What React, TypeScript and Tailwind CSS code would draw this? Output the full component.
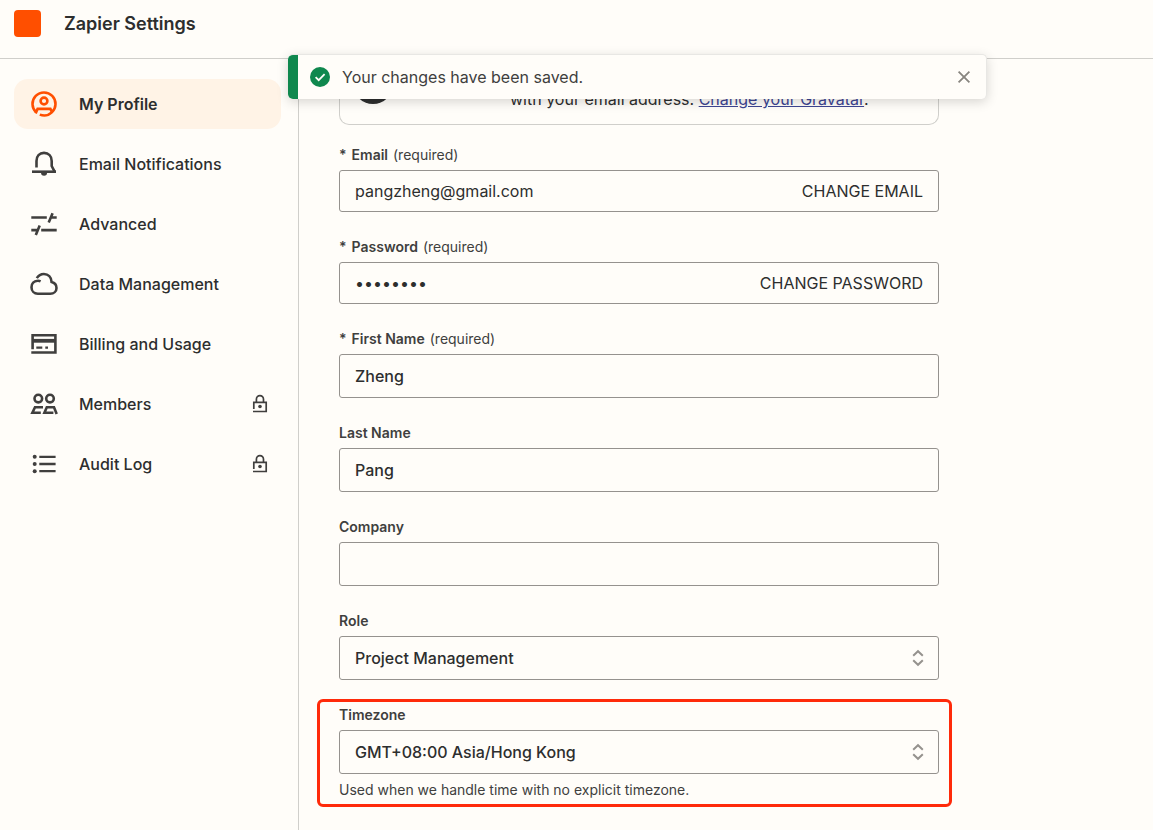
import { useState } from "react";
import type { ReactNode } from "react";

type IconProps = { children: ReactNode };

function NavIcon({ children }: IconProps) {
  return (
    <svg
      className="size-[30px] shrink-0"
      viewBox="0 0 30 30"
      fill="none"
      stroke="currentColor"
      strokeWidth="2.6"
      aria-hidden="true"
    >
      {children}
    </svg>
  );
}

function LockIcon() {
  return (
    <svg
      className="ml-auto size-5 shrink-0 text-[#403f3e]"
      viewBox="0 0 20 20"
      fill="none"
      stroke="currentColor"
      strokeWidth="1.7"
      aria-hidden="true"
    >
      <path d="M6.4 8V5.2a3.5 3.5 0 0 1 7.1 0V8" />
      <path d="M3.8 15V8.3h12.4v9.2H3" />
      <circle cx="10" cy="12.5" r="1.8" fill="currentColor" stroke="none" />
    </svg>
  );
}

type NavItem = { label: string; icon: ReactNode; active?: boolean; locked?: boolean };

const navItems: NavItem[] = [
  {
    label: "My Profile",
    active: true,
    icon: (
      <>
        <path d="M7.2 23.4A11.5 11.5 0 1 1 22.8 23.4A11.5 11.5 0 0 1 10.8 25.6" />
        <circle cx="15" cy="12" r="3.4" />
        <path d="M6.6 24.4L8.6 19.9H21.4L23.2 23.6" />
      </>
    ),
  },
  {
    label: "Email Notifications",
    icon: (
      <>
        <path d="M7.5 18.4V12C7.5 7 10.4 3.9 15 3.9S22.7 7 22.7 12V17L25.6 22.6" />
        <path d="M3 22.7H27" />
        <path d="M12 23.8a3.05 3.05 0 0 0 6.1 0Z" fill="currentColor" stroke="none" />
      </>
    ),
  },
  {
    label: "Advanced",
    icon: (
      <path d="M2.3 8.5H17.8M22.2 8.5H27.7M23.6 4.2L19.7 13.6M2.3 21.1H8.8M12.2 21.1H27.7M10.7 16.4L6.8 26" />
    ),
  },
  {
    label: "Data Management",
    icon: (
      <path d="M11.6 12.4C10.6 11.9 9.6 11.7 8.6 11.8C5 12 2.5 14.6 2.5 18.2C2.5 22 5.2 24.7 8.8 24.7H21.2C24.8 24.7 27.5 22.3 27.5 18.9C27.5 16 25.6 13.8 22.6 13C22.3 8.2 19.2 5 14.9 5C11.8 5 9.4 6.5 7.8 9.2" />
    ),
  },
  {
    label: "Billing and Usage",
    icon: (
      <>
        <path d="M3.6 20.2V6.2H26.4V23.5H2.3" />
        <path d="M3.5 11.8H26.5" strokeWidth="3.8" />
        <path d="M7.3 18.6H13.3M16.3 18.6H19" strokeWidth="2.2" />
      </>
    ),
  },
  {
    label: "Members",
    locked: true,
    icon: (
      <>
        <circle cx="9.3" cy="9.6" r="3.8" />
        <circle cx="21" cy="9.6" r="3.8" />
        <path d="M14 18.2H6L3.4 23.7H11.8" />
        <path d="M24.4 23.7H15.4L17.8 18.2H25L27.7 25" />
      </>
    ),
  },
  {
    label: "Audit Log",
    locked: true,
    icon: (
      <>
        <path d="M10.3 7.8H26.6M10.3 15H26.6M10.3 22.2H26.6" strokeWidth="2.3" />
        <g fill="currentColor" stroke="none">
          <circle cx="5.7" cy="7.8" r="2" />
          <circle cx="5.7" cy="15" r="2" />
          <circle cx="5.7" cy="22.2" r="2" />
        </g>
      </>
    ),
  },
];

function Sidebar() {
  return (
    <nav className="w-[299px] shrink-0 border-r border-[#d0cfcb] pt-5 pr-[17px] pl-3.5">
      <ul className="flex flex-col gap-2.5">
        {navItems.map((item) => (
          <li key={item.label}>
            <a
              href="#"
              aria-current={item.active ? "page" : undefined}
              className={
                item.active
                  ? "flex h-[50px] items-center gap-5 rounded-[14px] bg-[#fff3e6] pr-[11px] pl-[15px] font-semibold"
                  : "flex h-[50px] items-center gap-5 rounded-[14px] pr-[11px] pl-[15px] font-medium"
              }
            >
              <span className={item.active ? "text-[#ff4f00]" : "text-[#403f3e]"}>
                <NavIcon>{item.icon}</NavIcon>
              </span>
              {item.label}
              {item.locked && <LockIcon />}
            </a>
          </li>
        ))}
      </ul>
    </nav>
  );
}

function Label({ id, text, required }: { id: string; text: string; required?: boolean }) {
  return (
    <label
      htmlFor={id}
      className="mb-1 flex gap-[5px] text-sm leading-[22px] font-semibold text-[#403f3e]"
    >
      {required && <span>*</span>}
      <span>{text}</span>
      {required && <span className="font-normal">(required)</span>}
    </label>
  );
}

type LockedFieldProps = { id: string; label: string; type: string; value: string; action: string };

function LockedField({ id, label, type, value, action }: LockedFieldProps) {
  return (
    <div>
      <Label id={id} text={label} required />
      <div className="flex h-[42px] items-center rounded-[3px] border border-[#95928e] px-[15px]">
        <input
          id={id}
          type={type}
          value={value}
          readOnly
          className="min-w-0 flex-1 bg-transparent outline-none"
        />
        <button type="button">{action}</button>
      </div>
    </div>
  );
}

function TextField({
  id,
  label,
  initial,
  required,
}: {
  id: string;
  label: string;
  initial: string;
  required?: boolean;
}) {
  return (
    <div>
      <Label id={id} text={label} required={required} />
      <input
        id={id}
        type="text"
        defaultValue={initial}
        className="block h-11 w-full rounded-[3px] border border-[#95928e] bg-transparent px-[15px] font-medium outline-none"
      />
    </div>
  );
}

function SelectField({ id, label, option }: { id: string; label: string; option: string }) {
  return (
    <div>
      <Label id={id} text={label} />
      <div className="grid items-center">
        <select
          id={id}
          className="col-start-1 row-start-1 h-11 w-full appearance-none rounded-[3px] border border-[#95928e] bg-transparent px-[15px] font-medium outline-none"
        >
          <option>{option}</option>
        </select>
        <svg
          className="pointer-events-none col-start-1 row-start-1 mr-3 size-[18px] justify-self-end text-[#95928e]"
          viewBox="0 0 18 18"
          fill="none"
          stroke="currentColor"
          strokeWidth="2"
          aria-hidden="true"
        >
          <path d="M4.2 6.7L9 2.2L13.8 6.7M4.2 11.3L9 15.8L13.8 11.3" />
        </svg>
      </div>
    </div>
  );
}

function Toast({ onClose }: { onClose: () => void }) {
  return (
    <div
      role="status"
      className="absolute top-[54px] left-[288px] flex h-[45px] w-[699px] overflow-hidden rounded-[5px] border-t border-r border-[#e8e7e4] bg-[#fffdf9] shadow-[0_3px_12px_rgba(0,0,0,0.16)]"
    >
      <div className="w-2.5 rounded-l-[4px] bg-[#0f884e]" />
      <div className="flex flex-1 items-center pr-3.5 pl-3 text-[#403f3e]">
        <svg className="mr-3 size-5" viewBox="0 0 20 20" aria-hidden="true">
          <circle cx="10" cy="10" r="10" fill="#0f884e" />
          <path d="M5.6 10.2L8.7 13.2L14.6 7.2" fill="none" stroke="#fffdf9" strokeWidth="1.8" />
        </svg>
        <p>Your changes have been saved.</p>
        <button type="button" aria-label="Close" onClick={onClose} className="ml-auto text-[#88857f]">
          <svg
            className="size-4"
            viewBox="0 0 16 16"
            fill="none"
            stroke="currentColor"
            strokeWidth="1.8"
            aria-hidden="true"
          >
            <path d="M2.6 2.6L13.4 13.4M13.4 2.6L2.6 13.4" />
          </svg>
        </button>
      </div>
    </div>
  );
}

export default function App() {
  const [toastOpen, setToastOpen] = useState(true);

  return (
    <div className="relative flex min-h-screen flex-col bg-[#fffdf9] font-[Inter,sans-serif] text-base text-[#2d2e2e]">
      <header className="flex h-[59px] items-start gap-[23px] border-b border-[#d0cfcb] pt-2.5 pl-3.5">
        <div className="size-[27px] rounded-[4px] bg-[#ff4f00]" />
        <h1 className="text-lg leading-[27px] font-semibold">Zapier Settings</h1>
      </header>
      <div className="flex flex-1">
        <Sidebar />
        <main className="min-w-0 flex-1 px-10">
          <div className="mb-[19px] flex h-[66px] max-w-[600px] rounded-b-[10px] border border-t-0 border-[#d0cfcb] pt-[5px] pl-[13px]">
            <div className="size-10 rounded-full bg-[#2d2e2e]" />
            <p className="mt-[23px] ml-[117px]">
              with your email address.{" "}
              <a href="#" className="text-[#3d4592] underline">
                Change your Gravatar
              </a>
              .
            </p>
          </div>
          <form className="flex max-w-[600px] flex-col gap-6">
            <LockedField
              id="email"
              label="Email"
              type="email"
              value="pangzheng@gmail.com"
              action="CHANGE EMAIL"
            />
            <LockedField
              id="password"
              label="Password"
              type="password"
              value="12345678"
              action="CHANGE PASSWORD"
            />
            <TextField id="first-name" label="First Name" initial="Zheng" required />
            <TextField id="last-name" label="Last Name" initial="Pang" />
            <TextField id="company" label="Company" initial="" />
            <SelectField id="role" label="Role" option="Project Management" />
            <div className="relative">
              <SelectField id="timezone" label="Timezone" option="GMT+08:00 Asia/Hong Kong" />
              <p className="mt-[5px] text-sm leading-[22px] text-[#403f3e]">
                Used when we handle time with no explicit timezone.
              </p>
              <div className="pointer-events-none absolute -top-[5px] -right-[13px] -bottom-1.5 -left-[22px] rounded-[6px] border-3 border-[#ff2a0a]" />
            </div>
          </form>
        </main>
      </div>
      {toastOpen && <Toast onClose={() => setToastOpen(false)} />}
    </div>
  );
}
